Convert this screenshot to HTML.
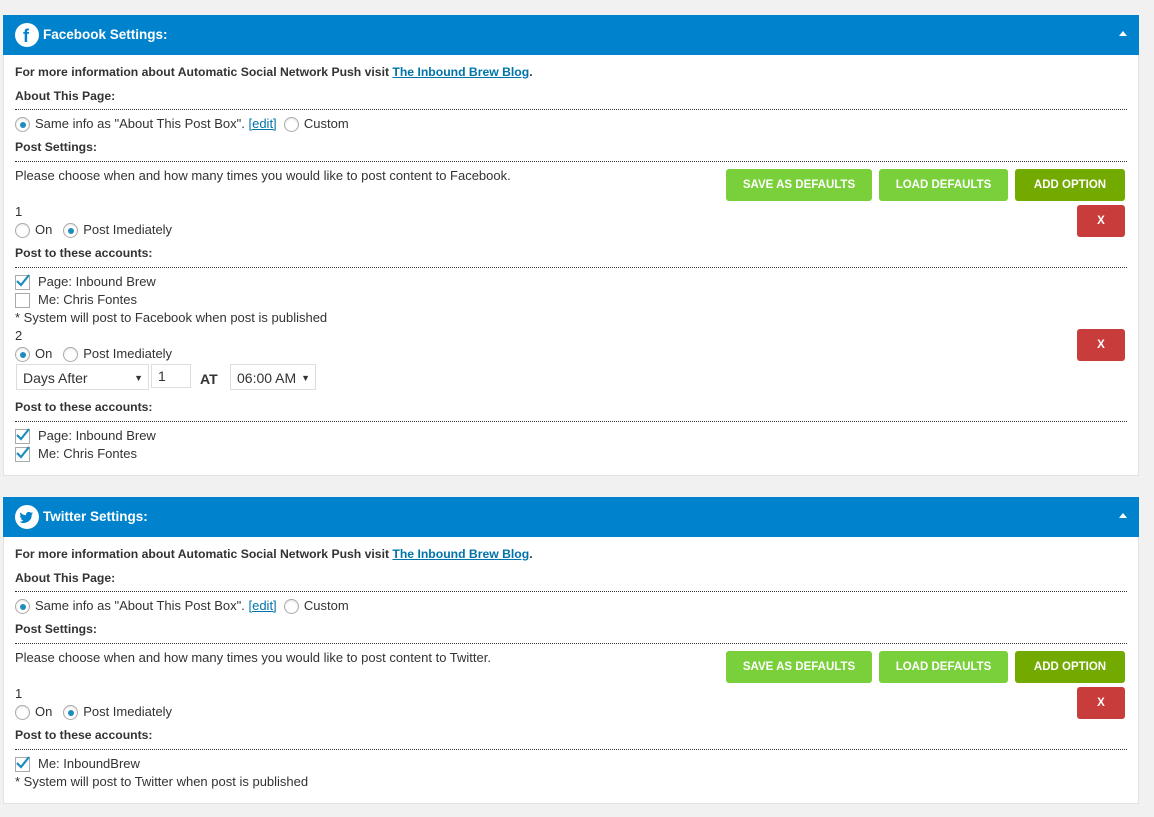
<!DOCTYPE html><html><head><style>
body{margin:0;background:#f1f1f1;font-family:"Liberation Sans",sans-serif;font-size:13px;color:#333;}
.p{position:absolute;left:3px;width:1136px;background:#fff;border:1px solid #e2e2e2;box-sizing:border-box}
.h{position:absolute;left:3px;width:1136px;height:40px;background:#0083cc;color:#fff;font-weight:bold;font-size:13.5px}
.h .ic{position:absolute;left:12px;top:8px;width:24px;height:24px;border-radius:50%;background:#fff}
.h .t{position:absolute;left:40px;top:12px}
.h .ar{position:absolute;right:12px;top:16px;width:0;height:0;border-left:4px solid transparent;border-right:4px solid transparent;border-bottom:5px solid #fff}
.a{position:absolute;line-height:16px;white-space:nowrap;margin-top:1px}
.b{font-weight:bold;font-size:12.2px}
.ln{position:absolute;left:15px;width:1112px;border-top:1px dotted #333}
.r{display:inline-block;width:15px;height:15px;border:1px solid #aaa;border-radius:50%;vertical-align:-4px;margin-right:5px;box-sizing:border-box;position:relative;box-shadow:inset 0 1px 2px rgba(0,0,0,.1)}
.r.on:after{content:"";position:absolute;left:3.5px;top:3.5px;width:6px;height:6px;border-radius:50%;background:#1e8cbe}
.c{display:inline-block;width:15px;height:15px;border:1px solid #aaa;vertical-align:-4px;margin-right:8px;box-sizing:border-box;position:relative}
.c svg{position:absolute;left:-1px;top:-3px}
.btn{position:absolute;height:32px;line-height:32px;text-align:center;color:#fff;font-weight:bold;font-size:11.5px;border-radius:3px;background:#7ad03a}
.add{background:#73aa00}.x{background:#c83c3c;width:48px}
a{color:#0073aa}
.sel{position:absolute;border:1px solid #ddd;height:26px;line-height:26px;font-size:14px;box-sizing:border-box;padding-left:6px}
.sel i{position:absolute;right:5px;top:0;font-style:normal;font-size:9px}
</style></head><body>
<!-- FB panel -->
<div class="p" style="top:15px;height:461px"></div>
<div class="h" style="top:15px"><div class="ic"><svg width="24" height="24"><text x="8" y="19" font-family="Liberation Sans" font-weight="bold" font-size="18" fill="#0083cc">f</text></svg></div><div class="t">Facebook Settings:</div><div class="ar"></div></div>
<div class="a b" style="left:15px;top:63px">For more information about Automatic Social Network Push visit <a href="#" style="font-weight:bold">The Inbound Brew Blog</a>.</div>
<div class="a b" style="left:15px;top:87px">About This Page:</div>
<div class="ln" style="top:109px"></div>
<div class="a" style="left:15px;top:115px"><span class="r on"></span>Same info as "About This Post Box". <a href="#">[edit]</a> &nbsp;<span class="r"></span>Custom</div>
<div class="a b" style="left:15px;top:138px">Post Settings:</div>
<div class="ln" style="top:161px"></div>
<div class="a" style="left:15px;top:167px">Please choose when and how many times you would like to post content to Facebook.</div>
<div class="btn" style="left:726px;top:169px;width:146px">SAVE AS DEFAULTS</div>
<div class="btn" style="left:879px;top:169px;width:129px">LOAD DEFAULTS</div>
<div class="btn add" style="left:1015px;top:169px;width:110px">ADD OPTION</div>
<div class="a" style="left:15px;top:203px">1</div>
<div class="a" style="left:15px;top:221px"><span class="r"></span>On &nbsp;&nbsp;<span class="r on"></span>Post Imediately</div>
<div class="btn x" style="left:1077px;top:205px">X</div>
<div class="a b" style="left:15px;top:244px">Post to these accounts:</div>
<div class="ln" style="top:267px"></div>
<div class="a" style="left:15px;top:273px"><span class="c"><svg width="16" height="16"><path d="M2 8l4 4 8-10" stroke="#1e8cbe" stroke-width="2.2" fill="none"/></svg></span>Page: Inbound Brew</div>
<div class="a" style="left:15px;top:291px"><span class="c"></span>Me: Chris Fontes</div>
<div class="a" style="left:15px;top:309px">* System will post to Facebook when post is published</div>
<div class="a" style="left:15px;top:327px">2</div>
<div class="a" style="left:15px;top:345px"><span class="r on"></span>On &nbsp;&nbsp;<span class="r"></span>Post Imediately</div>
<div class="btn x" style="left:1077px;top:329px">X</div>
<div class="sel" style="left:16px;top:364px;width:133px">Days After<i>▼</i></div>
<div class="sel" style="left:151px;top:364px;width:40px;height:24px;line-height:22px">1</div>
<div class="a" style="left:200px;top:370px;font-size:14px;font-weight:bold">AT</div>
<div class="sel" style="left:230px;top:364px;width:86px">06:00 AM<i>▼</i></div>
<div class="a b" style="left:15px;top:398px">Post to these accounts:</div>
<div class="ln" style="top:421px"></div>
<div class="a" style="left:15px;top:427px"><span class="c"><svg width="16" height="16"><path d="M2 8l4 4 8-10" stroke="#1e8cbe" stroke-width="2.2" fill="none"/></svg></span>Page: Inbound Brew</div>
<div class="a" style="left:15px;top:445px"><span class="c"><svg width="16" height="16"><path d="M2 8l4 4 8-10" stroke="#1e8cbe" stroke-width="2.2" fill="none"/></svg></span>Me: Chris Fontes</div>

<!-- Twitter panel -->
<div class="p" style="top:497px;height:307px"></div>
<div class="h" style="top:497px"><div class="ic"><svg width="24" height="24" viewBox="0 0 24 24"><path d="M18 8.2c-.5.2-1 .4-1.6.4.6-.3 1-.9 1.2-1.5-.5.3-1.1.5-1.7.7a2.8 2.8 0 0 0-4.8 2.5A7.9 7.9 0 0 1 5.4 7.4a2.8 2.8 0 0 0 .9 3.7c-.5 0-.9-.1-1.3-.3 0 1.4 1 2.5 2.2 2.8-.4.1-.9.1-1.3 0 .4 1.1 1.4 1.9 2.6 1.9A5.600 5.600 0 0 1 4.4 16.7a8 8 0 0 0 12.300-7.100c.5-.4 1-.8 1.300-1.400z" fill="#0083cc"/></svg></div><div class="t">Twitter Settings:</div><div class="ar"></div></div>
<div class="a b" style="left:15px;top:545px">For more information about Automatic Social Network Push visit <a href="#" style="font-weight:bold">The Inbound Brew Blog</a>.</div>
<div class="a b" style="left:15px;top:569px">About This Page:</div>
<div class="ln" style="top:591px"></div>
<div class="a" style="left:15px;top:597px"><span class="r on"></span>Same info as "About This Post Box". <a href="#">[edit]</a> &nbsp;<span class="r"></span>Custom</div>
<div class="a b" style="left:15px;top:620px">Post Settings:</div>
<div class="ln" style="top:643px"></div>
<div class="a" style="left:15px;top:649px">Please choose when and how many times you would like to post content to Twitter.</div>
<div class="btn" style="left:726px;top:651px;width:146px">SAVE AS DEFAULTS</div>
<div class="btn" style="left:879px;top:651px;width:129px">LOAD DEFAULTS</div>
<div class="btn add" style="left:1015px;top:651px;width:110px">ADD OPTION</div>
<div class="a" style="left:15px;top:685px">1</div>
<div class="a" style="left:15px;top:703px"><span class="r"></span>On &nbsp;&nbsp;<span class="r on"></span>Post Imediately</div>
<div class="btn x" style="left:1077px;top:687px">X</div>
<div class="a b" style="left:15px;top:726px">Post to these accounts:</div>
<div class="ln" style="top:749px"></div>
<div class="a" style="left:15px;top:755px"><span class="c"><svg width="16" height="16"><path d="M2 8l4 4 8-10" stroke="#1e8cbe" stroke-width="2.2" fill="none"/></svg></span>Me: InboundBrew</div>
<div class="a" style="left:15px;top:773px">* System will post to Twitter when post is published</div>
</body></html>
